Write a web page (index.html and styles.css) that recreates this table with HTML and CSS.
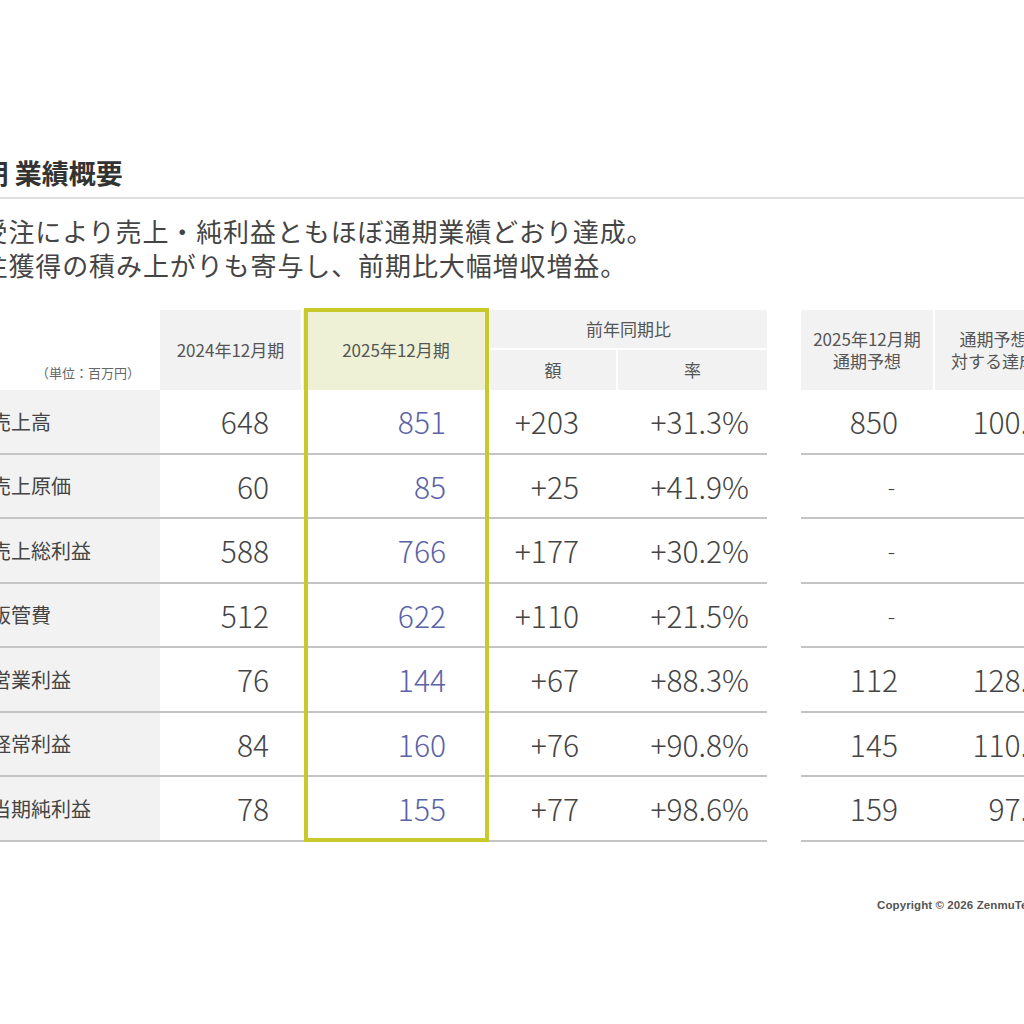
FILE: index.html
```html
<!DOCTYPE html>
<html lang="ja">
<head>
<meta charset="utf-8">
<title>業績概要</title>
<link rel="stylesheet" href="styles.css">
</head>
<body>
<div class="slide">
  <h1 class="title">2025年12月期 業績概要</h1>
  <p class="lead">大型案件の受注により売上・純利益ともほぼ通期業績どおり達成。<br>継続的な受注獲得の積み上がりも寄与し、前期比大幅増収増益。</p>
  <div class="tables">
    <div class="grid">
      <div class="h h-unit"><span>（単位：百万円）</span></div>
      <div class="h h-2024">2024年12月期</div>
      <div class="h h-2025">2025年12月期</div>
      <div class="h h-yoy">前年同期比</div>
      <div class="h h-sp"></div>
      <div class="h h-fc"><span class="hl">2025年12月期</span><span class="hl">通期予想</span></div>
      <div class="h h-ach"><span class="hl">通期予想に</span><span class="hl">対する達成率</span></div>
      <div class="h h-amt">額</div>
      <div class="h h-rate">率</div>

      <div class="c lbl">売上高</div><div class="c n">648</div><div class="c n cur">851</div><div class="c n amt">+203</div><div class="c n rate">+31.3%</div><div class="sp"></div><div class="c n fc">850</div><div class="c n ach">100.1%</div>
      <div class="c lbl">売上原価</div><div class="c n">60</div><div class="c n cur">85</div><div class="c n amt">+25</div><div class="c n rate">+41.9%</div><div class="sp"></div><div class="c n fc dash">-</div><div class="c n ach dash">-</div>
      <div class="c lbl">売上総利益</div><div class="c n">588</div><div class="c n cur">766</div><div class="c n amt">+177</div><div class="c n rate">+30.2%</div><div class="sp"></div><div class="c n fc dash">-</div><div class="c n ach dash">-</div>
      <div class="c lbl">販管費</div><div class="c n">512</div><div class="c n cur">622</div><div class="c n amt">+110</div><div class="c n rate">+21.5%</div><div class="sp"></div><div class="c n fc dash">-</div><div class="c n ach dash">-</div>
      <div class="c lbl">営業利益</div><div class="c n">76</div><div class="c n cur">144</div><div class="c n amt">+67</div><div class="c n rate">+88.3%</div><div class="sp"></div><div class="c n fc">112</div><div class="c n ach">128.6%</div>
      <div class="c lbl">経常利益</div><div class="c n">84</div><div class="c n cur">160</div><div class="c n amt">+76</div><div class="c n rate">+90.8%</div><div class="sp"></div><div class="c n fc">145</div><div class="c n ach">110.3%</div>
      <div class="c lbl">当期純利益</div><div class="c n">78</div><div class="c n cur">155</div><div class="c n amt">+77</div><div class="c n rate">+98.6%</div><div class="sp"></div><div class="c n fc">159</div><div class="c n ach">97.5%</div>
    </div>
    <div class="frame"></div>
  </div>
  <footer class="copy">Copyright © 2026 ZenmuTech, Inc. All rights reserved.</footer>
</div>
</body>
</html>
```
FILE: styles.css
```css
html, body {
  margin: 0;
  padding: 0;
  background: #ffffff;
  overflow: hidden;
}
body {
  width: 1024px;
  height: 1024px;
  font-family: "Noto Sans CJK JP", "Noto Sans", sans-serif;
  color: #444444;
}
.slide {
  margin-left: -40px;
  width: 1140px;
  padding-top: 155px;
}
.title {
  margin: 0;
  font-size: 27px;
  font-weight: 700;
  line-height: 36px;
  color: #333333;
  text-indent: -128px;
  white-space: nowrap;
  padding-bottom: 6px;
  border-bottom: 2px solid #dedede;
}
.lead {
  margin: 15px 0 0 -113px;
  font-size: 26px;
  line-height: 34px;
  letter-spacing: 0.9px;
  color: #444444;
  white-space: nowrap;
}
.tables {
  position: relative;
  margin-top: 28px;
}
.grid {
  display: grid;
  grid-template-columns: 200px 143px 186px 129px 149px 34px 134px 150px;
  grid-template-rows: 40px 40px repeat(7, 64.5px);
}
.h {
  box-sizing: border-box;
  background: #f2f2f2;
  font-size: 17px;
  color: #555555;
  display: flex;
  align-items: center;
  justify-content: center;
  text-align: center;
  line-height: 22px;
}
.h-fc, .h-ach {
  flex-direction: column;
}
.hl {
  display: block;
  white-space: nowrap;
}
.h-unit {
  grid-row: 1 / 3;
  background: #ffffff;
  align-items: flex-end;
  justify-content: flex-end;
  padding: 0 20px 6px 0;
  font-size: 13px;
  color: #666666;
}
.h-2024 {
  grid-row: 1 / 3;
  border-right: 2px solid #ffffff;
}
.h-2025 {
  grid-row: 1 / 3;
  background: #eef1d5;
}
.h-yoy {
  grid-column: 4 / 6;
  border-left: 1px solid #ffffff;
  border-bottom: 2px solid #ffffff;
}
.h-sp {
  grid-row: 1 / 3;
  background: #ffffff;
}
.h-fc {
  grid-row: 1 / 3;
  border-right: 2px solid #ffffff;
}
.h-ach {
  grid-row: 1 / 3;
  padding-right: 16px;
}
.h-amt {
  grid-row: 2;
  grid-column: 4;
  border-left: 1px solid #ffffff;
  border-right: 2px solid #ffffff;
}
.h-rate {
  grid-row: 2;
  grid-column: 5;
}
.c {
  box-sizing: border-box;
  border-bottom: 2px solid #c4c4c4;
  display: flex;
  align-items: center;
}
.lbl {
  background: #f2f2f2;
  padding-left: 31px;
  font-size: 20px;
  color: #444444;
}
.n {
  justify-content: flex-end;
  font-size: 30px;
  font-weight: 300;
  color: #444444;
  padding-right: 34px;
}
.cur {
  color: #5a62a8;
  padding-right: 43px;
}
.amt {
  padding-right: 39px;
}
.rate {
  padding-right: 18px;
}
.fc {
  padding-right: 37px;
}
.ach {
  padding-right: 14px;
}
.dash {
  font-size: 22px;
  padding-right: 40px;
}
.ach.dash {
  padding-right: 52px;
}
.sp {
  background: #ffffff;
}
.frame {
  position: absolute;
  left: 344px;
  top: -2px;
  width: 185px;
  height: 534px;
  box-sizing: border-box;
  border: 4px solid #c8c92a;
  pointer-events: none;
}
.copy {
  margin: 56px 0 0 917px;
  font-family: "Liberation Sans", Arial, sans-serif;
  font-size: 11.5px;
  font-weight: 700;
  letter-spacing: 0.1px;
  line-height: 14px;
  color: #555555;
  white-space: nowrap;
}
```
